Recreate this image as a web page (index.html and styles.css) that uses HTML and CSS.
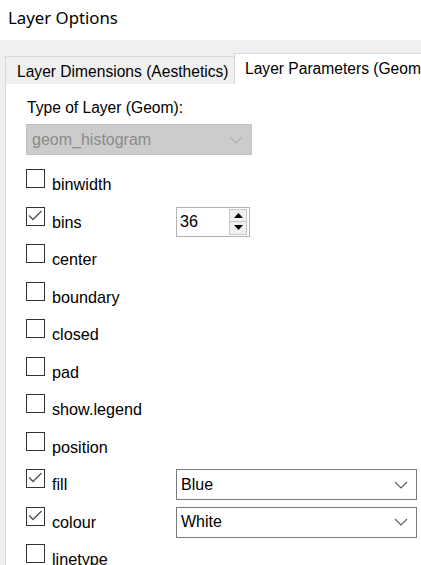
FILE: index.html
```html
<!DOCTYPE html>
<html>
<head>
<meta charset="utf-8">
<link rel="stylesheet" href="styles.css">
</head>
<body>
<div class="window">
  <header class="titlebar">Layer Options</header>
  <div class="client">
    <div class="tabs">
      <div class="tab">Layer Dimensions (Aesthetics)</div>
      <div class="tab active">Layer Parameters (Geom)</div>
    </div>
    <div class="panel">
      <div class="field-label">Type of Layer (Geom):</div>
      <div class="combo disabled">
        <span>geom_histogram</span>
        <svg class="chev" width="14" height="8" viewBox="0 0 14 8"><polyline points="1,1 7,7 13,1" fill="none" stroke="#b0b0b0" stroke-width="1.2"/></svg>
      </div>
      <div class="rows">
        <div class="row"><span class="cb"></span><span class="lbl">binwidth</span></div>
        <div class="row"><span class="cb checked"><svg width="17" height="17" viewBox="0 0 17 17"><polyline points="2,7.5 6,11.5 14.5,3" fill="none" stroke="#555" stroke-width="1.4"/></svg></span><span class="lbl">bins</span>
          <div class="spin">
            <span class="spin-val">36</span>
            <div class="spin-btns">
              <div class="sbtn"><svg width="9" height="5" viewBox="0 0 9 5"><polygon points="0,5 9,5 4.5,0" fill="#000"/></svg></div>
              <div class="sbtn"><svg width="9" height="5" viewBox="0 0 9 5"><polygon points="0,0 9,0 4.5,5" fill="#000"/></svg></div>
            </div>
          </div>
        </div>
        <div class="row"><span class="cb"></span><span class="lbl">center</span></div>
        <div class="row"><span class="cb"></span><span class="lbl">boundary</span></div>
        <div class="row"><span class="cb"></span><span class="lbl">closed</span></div>
        <div class="row"><span class="cb"></span><span class="lbl">pad</span></div>
        <div class="row"><span class="cb"></span><span class="lbl">show.legend</span></div>
        <div class="row"><span class="cb"></span><span class="lbl">position</span></div>
        <div class="row"><span class="cb checked"><svg width="17" height="17" viewBox="0 0 17 17"><polyline points="2,7.5 6,11.5 14.5,3" fill="none" stroke="#555" stroke-width="1.4"/></svg></span><span class="lbl">fill</span>
          <div class="combo wide"><span>Blue</span><svg class="chev" width="14" height="8" viewBox="0 0 14 8"><polyline points="1,1 7,7 13,1" fill="none" stroke="#606060" stroke-width="1.2"/></svg></div>
        </div>
        <div class="row"><span class="cb checked"><svg width="17" height="17" viewBox="0 0 17 17"><polyline points="2,7.5 6,11.5 14.5,3" fill="none" stroke="#555" stroke-width="1.4"/></svg></span><span class="lbl">colour</span>
          <div class="combo wide"><span>White</span><svg class="chev" width="14" height="8" viewBox="0 0 14 8"><polyline points="1,1 7,7 13,1" fill="none" stroke="#606060" stroke-width="1.2"/></svg></div>
        </div>
        <div class="row"><span class="cb"></span><span class="lbl">linetype</span></div>
      </div>
    </div>
  </div>
</div>
</body>
</html>
```
FILE: styles.css
```css
html, body {
  margin: 0;
  padding: 0;
  background: #ffffff;
  overflow: hidden;
}
.window {
  width: 421px;
  height: 565px;
  display: flex;
  flex-direction: column;
  font-family: "Liberation Sans", Arial, sans-serif;
  color: #000;
}
.titlebar {
  height: 40px;
  box-sizing: border-box;
  padding: 6px 0 0 8px;
  font-family: "Noto Sans", "Open Sans", sans-serif;
  font-size: 16.8px;
  line-height: 24px;
  background: #fff;
}
.client {
  flex: 1;
  background: #f0f0f0;
  padding: 13px 0 0 5px;
  display: flex;
  flex-direction: column;
  min-height: 0;
}
.tabs {
  display: flex;
  align-items: flex-end;
  white-space: nowrap;
}
.tab {
  height: 28px;
  box-sizing: border-box;
  border: 1px solid #d9d9d9;
  border-bottom: none;
  background: #f0f0f0;
  padding: 0 0 0 11px;
  width: 230px;
  font-size: 15.6px;
  line-height: 30px;
}
.tab.active {
  height: 31px;
  background: #fff;
  border-left: 1px solid #d9d9d9;
  border-right: none;
  width: auto;
  flex: 1;
  padding-left: 10px;
  line-height: 29px;
  overflow: hidden;
  margin-left: -1px;
}
.panel {
  flex: 1;
  background: #fff;
  border-left: 1px solid #d9d9d9;
  padding: 14px 0 0 20px;
}
.field-label {
  font-size: 15.6px;
  line-height: 20px;
  margin-left: 1px;
}
.combo {
  display: flex;
  align-items: center;
  justify-content: space-between;
  box-sizing: border-box;
  height: 31px;
  padding: 0 8px 0 5px;
  font-size: 16px;
  border: 1px solid #7a7a7a;
  background: #fff;
}
.combo.disabled {
  width: 226px;
  margin-top: 6px;
  background: #cccccc;
  border-color: #c2c2c2;
  color: #8a8a8a;
}
.combo.wide {
  width: 241px;
  margin-left: auto;
  margin-right: 4px;
  padding-left: 4px;
}
.chev {
  display: block;
}
.rows {
  margin-top: 14px;
}
.row {
  height: 37.5px;
  display: flex;
  align-items: flex-start;
}
.cb {
  width: 19px;
  height: 19px;
  box-sizing: border-box;
  border: 1.5px solid #333;
  background: #fff;
  display: flex;
  align-items: center;
  justify-content: center;
  flex: none;
}
.cb svg {
  display: block;
}
.lbl {
  margin-left: 7px;
  font-size: 16.2px;
  line-height: 20px;
  margin-top: 5px;
  width: 124px;
}
.spin {
  width: 74px;
  height: 30px;
  box-sizing: border-box;
  border: 1px solid #b4b4b4;
  display: flex;
  align-items: center;
  padding: 0 2px 0 3px;
  font-size: 16.2px;
}
.spin-val {
  flex: 1;
}
.spin-btns {
  width: 18px;
  height: 26px;
  display: flex;
  flex-direction: column;
}
.sbtn {
  flex: 1;
  border: 1px solid #c8c8c8;
  background: #f0f0f0;
  display: flex;
  align-items: center;
  justify-content: center;
}
.sbtn + .sbtn {
  border-top: none;
}
.sbtn svg {
  display: block;
}
```
